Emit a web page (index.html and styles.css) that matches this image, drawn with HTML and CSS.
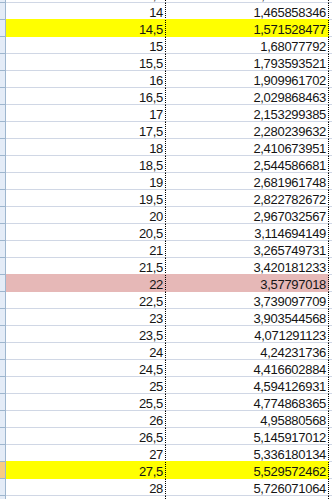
FILE: index.html
```html
<!DOCTYPE html>
<html>
<head>
<meta charset="utf-8">
<link rel="stylesheet" href="styles.css">
</head>
<body>
<div class="sheet">
  <div class="row"><div class="hdr"></div><div class="a">13,5</div><div class="b">1,366428511</div><div class="c"></div></div>
  <div class="row"><div class="hdr"></div><div class="a">14</div><div class="b">1,465858346</div><div class="c"></div></div>
  <div class="row yellow"><div class="hdr"></div><div class="a">14,5</div><div class="b">1,571528477</div><div class="c"></div></div>
  <div class="row"><div class="hdr"></div><div class="a">15</div><div class="b">1,68077792</div><div class="c"></div></div>
  <div class="row"><div class="hdr"></div><div class="a">15,5</div><div class="b">1,793593521</div><div class="c"></div></div>
  <div class="row"><div class="hdr"></div><div class="a">16</div><div class="b">1,909961702</div><div class="c"></div></div>
  <div class="row"><div class="hdr"></div><div class="a">16,5</div><div class="b">2,029868463</div><div class="c"></div></div>
  <div class="row"><div class="hdr"></div><div class="a">17</div><div class="b">2,153299385</div><div class="c"></div></div>
  <div class="row"><div class="hdr"></div><div class="a">17,5</div><div class="b">2,280239632</div><div class="c"></div></div>
  <div class="row"><div class="hdr"></div><div class="a">18</div><div class="b">2,410673951</div><div class="c"></div></div>
  <div class="row"><div class="hdr"></div><div class="a">18,5</div><div class="b">2,544586681</div><div class="c"></div></div>
  <div class="row"><div class="hdr"></div><div class="a">19</div><div class="b">2,681961748</div><div class="c"></div></div>
  <div class="row"><div class="hdr"></div><div class="a">19,5</div><div class="b">2,822782672</div><div class="c"></div></div>
  <div class="row"><div class="hdr"></div><div class="a">20</div><div class="b">2,967032567</div><div class="c"></div></div>
  <div class="row"><div class="hdr"></div><div class="a">20,5</div><div class="b">3,114694149</div><div class="c"></div></div>
  <div class="row"><div class="hdr"></div><div class="a">21</div><div class="b">3,265749731</div><div class="c"></div></div>
  <div class="row"><div class="hdr"></div><div class="a">21,5</div><div class="b">3,420181233</div><div class="c"></div></div>
  <div class="row pink"><div class="hdr"></div><div class="a">22</div><div class="b">3,57797018</div><div class="c"></div></div>
  <div class="row"><div class="hdr"></div><div class="a">22,5</div><div class="b">3,739097709</div><div class="c"></div></div>
  <div class="row"><div class="hdr"></div><div class="a">23</div><div class="b">3,903544568</div><div class="c"></div></div>
  <div class="row"><div class="hdr"></div><div class="a">23,5</div><div class="b">4,071291123</div><div class="c"></div></div>
  <div class="row"><div class="hdr"></div><div class="a">24</div><div class="b">4,24231736</div><div class="c"></div></div>
  <div class="row"><div class="hdr"></div><div class="a">24,5</div><div class="b">4,416602884</div><div class="c"></div></div>
  <div class="row"><div class="hdr"></div><div class="a">25</div><div class="b">4,594126931</div><div class="c"></div></div>
  <div class="row"><div class="hdr"></div><div class="a">25,5</div><div class="b">4,774868365</div><div class="c"></div></div>
  <div class="row"><div class="hdr"></div><div class="a">26</div><div class="b">4,95880568</div><div class="c"></div></div>
  <div class="row"><div class="hdr"></div><div class="a">26,5</div><div class="b">5,145917012</div><div class="c"></div></div>
  <div class="row"><div class="hdr"></div><div class="a">27</div><div class="b">5,336180134</div><div class="c"></div></div>
  <div class="row yellow selected"><div class="hdr"></div><div class="a">27,5</div><div class="b">5,529572462</div><div class="c"></div></div>
  <div class="row"><div class="hdr"></div><div class="a">28</div><div class="b">5,726071064</div><div class="c"></div></div>
  <div class="row"><div class="hdr"></div><div class="a">28,5</div><div class="b">5,925897413</div><div class="c"></div></div>
</div>
</body>
</html>
```

FILE: styles.css
```css
html, body {
  margin: 0;
  padding: 0;
  background: #ffffff;
  overflow: hidden;
}

.sheet {
  margin-top: -14px;
  font-family: "Liberation Sans", Arial, sans-serif;
  font-size: 13px;
  letter-spacing: -0.3px;
  color: #151515;
}

.row {
  display: grid;
  grid-template-columns: 6px 160px 163px 1fr;
  height: 17px;
}

.row > div {
  box-sizing: border-box;
  height: 17px;
  border-bottom: 1px solid #d0d7e5;
  line-height: 20px;
  white-space: nowrap;
}

.row > .hdr {
  background: #e4ecf7;
  border-right: 1px solid #9eb6ce;
  border-bottom-color: #9eb6ce;
}

.row > .a,
.row > .b {
  text-align: right;
  padding-right: 2px;
  border-right: 1px dotted #000000;
}

.row.yellow > .a,
.row.yellow > .b {
  background: #ffff00;
  border-bottom-color: #ffff00;
  box-shadow: 0 -1px 0 #ffff00;
}

.row.pink > .a,
.row.pink > .b {
  background: #e6b8b7;
  border-bottom-color: #e6b8b7;
  box-shadow: 0 -1px 0 #e6b8b7;
}

.row.selected > .hdr {
  background: #f8cb85;
}
```
